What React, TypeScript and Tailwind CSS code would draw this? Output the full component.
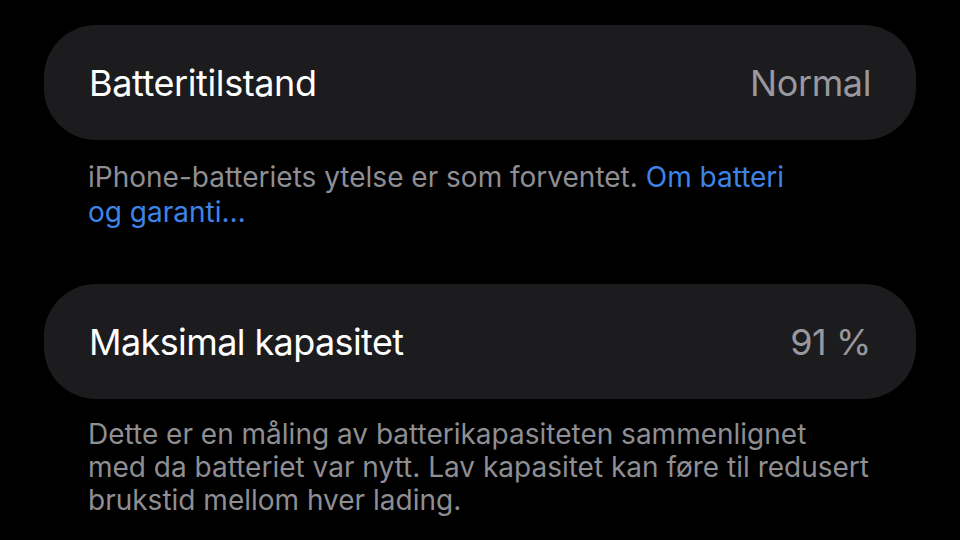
export default function App() {
  return (
    <div
      className="w-[960px] h-[540px] overflow-hidden bg-black px-[44px] pt-[25px]"
      style={{ fontFamily: "Inter, 'Noto Sans', sans-serif" }}
    >
      {/* Battery health */}
      <div className="flex h-[115px] items-center justify-between rounded-[52px] bg-[#1c1c1e] px-[45px]">
        <span className="text-[36px] tracking-[-0.4px] text-white">Batteritilstand</span>
        <span className="text-[36px] tracking-[-0.4px] text-[#98989e]">Normal</span>
      </div>
      <p className="mt-[20px] px-[44px] text-[28px] leading-[35px] tracking-[0px] text-[#8e8e93]">
        iPhone-batteriets ytelse er som forventet.{" "}
        <span className="text-[#3f83e6]">
          Om batteri
          <br />
          og garanti…
        </span>
      </p>

      {/* Max capacity */}
      <div className="mt-[54px] flex h-[115px] items-center justify-between rounded-[52px] bg-[#1c1c1e] px-[45px]">
        <span className="text-[36px] tracking-[-0.6px] text-white">Maksimal kapasitet</span>
        <span className="text-[36px] tracking-[-0.4px] text-[#98989e]">91 %</span>
      </div>
      <p className="mt-[19px] px-[44px] text-[28px] leading-[33px] tracking-[0px] text-[#8e8e93]">
        Dette er en måling av batterikapasiteten sammenlignet
        <br />
        med da batteriet var nytt. Lav kapasitet kan føre til redusert
        <br />
        brukstid mellom hver lading.
      </p>
    </div>
  );
}
